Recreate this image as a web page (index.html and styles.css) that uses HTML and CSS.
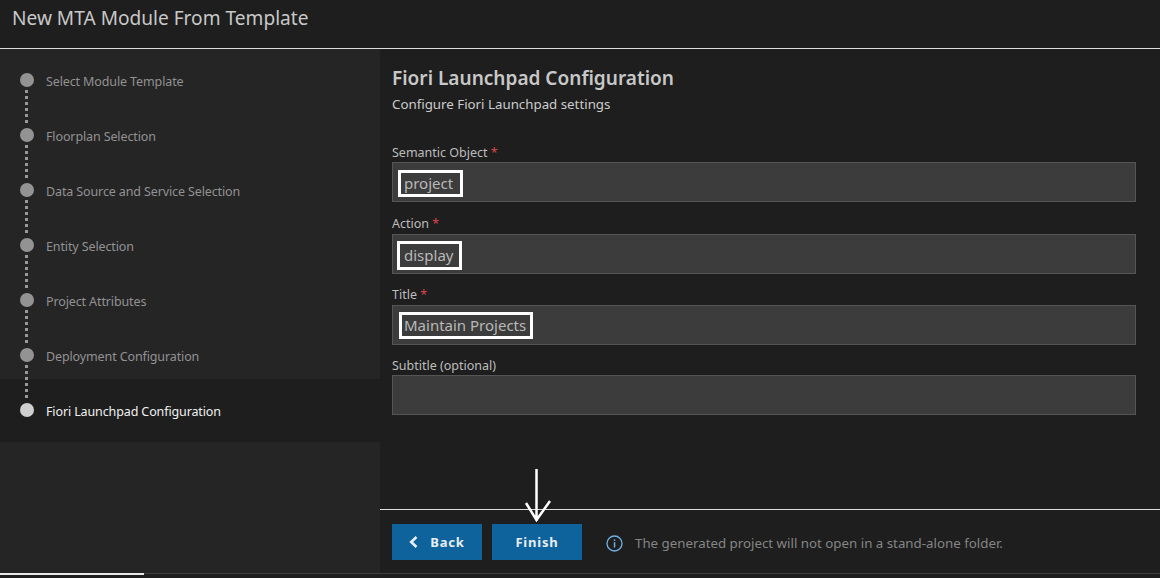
FILE: index.html
```html
<!DOCTYPE html>
<html lang="en">
<head>
    <meta charset="UTF-8">
    <meta name="viewport" content="width=device-width, initial-scale=1.0">
    <title>New MTA Module From Template</title>
    <link rel="stylesheet" href="styles.css">
</head>
<body>
    <header class="top-bar">New MTA Module From Template</header>

    <div class="wizard">
        <!-- Steps -->
        <nav class="steps">
            <div class="step"><span class="dot"></span><span class="step-name">Select Module Template</span></div>
            <div class="step"><span class="dot"></span><span class="step-name">Floorplan Selection</span></div>
            <div class="step"><span class="dot"></span><span class="step-name">Data Source and Service Selection</span></div>
            <div class="step"><span class="dot"></span><span class="step-name">Entity Selection</span></div>
            <div class="step"><span class="dot"></span><span class="step-name">Project Attributes</span></div>
            <div class="step"><span class="dot"></span><span class="step-name">Deployment Configuration</span></div>
            <div class="step active"><span class="dot"></span><span class="step-name">Fiori Launchpad Configuration</span></div>
        </nav>

        <main class="content">
            <div class="form">
                <h1>Fiori Launchpad Configuration</h1>
                <p class="subtitle">Configure Fiori Launchpad settings</p>

                <div class="field first">
                    <label>Semantic Object <span class="req">*</span></label>
                    <div class="input"><span class="marked">project</span></div>
                </div>
                <div class="field">
                    <label>Action <span class="req">*</span></label>
                    <div class="input"><span class="marked mark-action">display</span></div>
                </div>
                <div class="field">
                    <label>Title <span class="req">*</span></label>
                    <div class="input"><span class="marked mark-title">Maintain Projects</span></div>
                </div>
                <div class="field">
                    <label>Subtitle (optional)</label>
                    <div class="input"></div>
                </div>
            </div>

            <footer class="actions">
                <button class="btn">
                    <svg class="chevron" width="9" height="12" viewBox="0 0 9 12"><path d="M7.5 1 L2.2 6 L7.5 11" fill="none" stroke="#e8eef3" stroke-width="2.6"/></svg>
                    Back
                </button>
                <button class="btn">Finish</button>
                <svg class="info" width="17" height="17" viewBox="0 0 17 17">
                    <circle cx="8.5" cy="8.5" r="7.5" fill="none" stroke="#6fb1e6" stroke-width="1.3"/>
                    <rect x="7.8" y="7.2" width="1.5" height="5.3" fill="#6fb1e6"/>
                    <rect x="7.8" y="4.4" width="1.5" height="1.5" fill="#6fb1e6"/>
                </svg>
                <span class="note">The generated project will not open in a stand-alone folder.</span>

                <!-- hand drawn arrow on top of the screenshot -->
                <svg class="arrow" width="30" height="54" viewBox="0 0 30 54">
                    <path d="M14.5 0 V52 M4 34 L14.5 51 L28 32" fill="none" stroke="#fff" stroke-width="2.5"/>
                </svg>
            </footer>
        </main>
    </div>

    <div class="status"><div class="status-progress"></div></div>
</body>
</html>
```

FILE: styles.css
```css
* {
    box-sizing: border-box;
}
body {
    margin: 0;
    height: 578px;
    overflow: hidden;
    display: flex;
    flex-direction: column;
    background: #1e1e1e;
    color: #cccccc;
    font-family: "Noto Sans", Arial, sans-serif;
    font-size: 12.5px;
}
.top-bar {
    height: 49px;
    padding: 6px 12px 0;
    font-size: 19.1px;
    line-height: 25px;
    color: #c8c8c8;
    border-bottom: 1px solid #dddddd;
}
.wizard {
    flex: 1;
    display: flex;
    min-height: 0;
}

/* steps */
.steps {
    width: 380px;
    background: #252526;
}
.step {
    position: relative;
    height: 55px;
    padding: 24px 0 0 20px;
    display: flex;
    align-items: flex-start;
    gap: 12px;
    color: #929292;
}
.step.active {
    height: 63px;
    background: #1e1e1e;
    color: #f0f0f0;
}
.dot {
    width: 14px;
    height: 14px;
    border-radius: 50%;
    background: #939393;
    flex-shrink: 0;
}
.active .dot {
    background: #cfcfcf;
}
.step:not(.active)::after {
    content: "";
    position: absolute;
    z-index: 1;
    left: 25px;
    top: 41px;
    height: 33px;
    border-left: 3px dotted #999999;
}
.step-name {
    line-height: 17px;
    letter-spacing: -0.12px;
}

/* form */
.content {
    flex: 1;
    display: flex;
    flex-direction: column;
    min-width: 0;
}
.form {
    flex: 1;
    padding: 16px 24px 0 12px;
}
h1 {
    margin: 0;
    font-size: 19.05px;
    line-height: 26px;
    font-weight: 600;
    color: #c8c8c8;
}
.subtitle {
    margin: 4px 0 0;
    font-size: 13.3px;
    line-height: 18px;
    color: #cccccc;
}
.field.first {
    margin-top: 31px;
}
label {
    display: block;
    height: 18px;
    line-height: 18px;
    margin-top: 12px;
    color: #bdbdbd;
}
.field:nth-of-type(2) label {
    height: 19px;
    margin-top: 13px;
}
.field:nth-of-type(3) label {
    height: 19px;
    margin-top: 12px;
}
.req {
    color: #d9464a;
}
.input {
    height: 40px;
    padding: 6px 0 0 5px;
    background: #3c3c3c;
    border: 1px solid #555555;
    font-size: 15px;
    color: #b8b8b8;
    display: flex;
    align-items: flex-start;
}
.marked {
    margin-top: 1px;
    border: 3px solid #ffffff;
    padding: 0 7px 1px 3px;
    line-height: 20px;
}
.mark-action {
    margin: 0 0 0 -1px;
    padding: 0 6px 1px 4px;
    line-height: 22px;
}
.mark-title {
    margin: 0 0 0 1px;
    padding: 0 4px 0 2px;
    line-height: 21px;
}

/* footer */
.actions {
    position: relative;
    height: 64px;
    padding-top: 14px;
    padding-left: 12px;
    display: flex;
    align-items: flex-start;
    border-top: 1px solid #dddddd;
}
.btn {
    width: 90px;
    height: 36px;
    margin-right: 10px;
    border: 0;
    background: #0e639c;
    color: #e8eef3;
    font-family: inherit;
    font-size: 13px;
    font-weight: 700;
    letter-spacing: 0.8px;
    display: flex;
    align-items: center;
    justify-content: center;
    gap: 12px;
}
.info {
    margin: 11px 12px 0 14px;
}
.note {
    margin-top: 10px;
    font-size: 13.3px;
    line-height: 18px;
    color: #858585;
}
.arrow {
    position: absolute;
    left: 142px;
    top: -41px;
}

/* bottom strip */
.status {
    height: 5px;
    border-top: 1px solid #3f3f3f;
    position: relative;
}
.status-progress {
    position: absolute;
    left: 0;
    top: -1px;
    width: 144px;
    height: 2px;
    background: #e8e8e8;
}
```
